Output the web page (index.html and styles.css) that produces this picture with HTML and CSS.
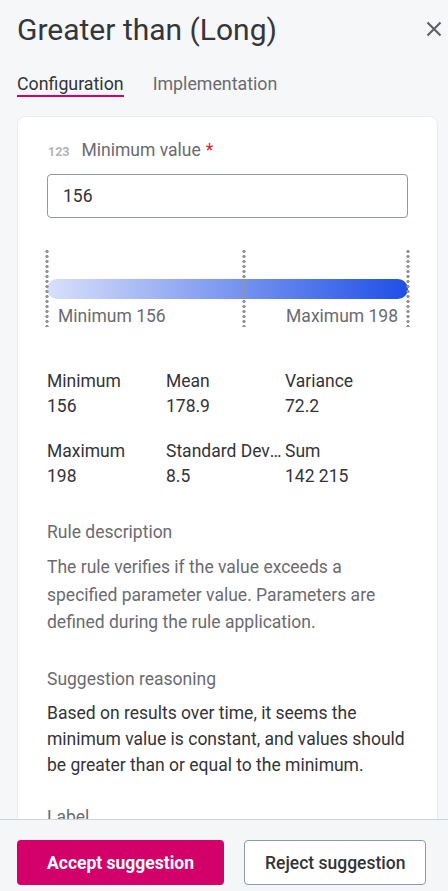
FILE: index.html
```html
<!DOCTYPE html>
<html>
<head>
<meta charset="utf-8"/>
<title>Greater than (Long)</title>
<link rel="stylesheet" href="styles.css">
</head>
<body>
<div class="panel">

<div class="header">
<h1 class="title">Greater than (Long)</h1>
<button class="close" aria-label="Close">
<svg width="16" height="16" viewBox="0 0 16 16"><path d="M1.5 1.5 L14.5 14.5 M14.5 1.5 L1.5 14.5" stroke="#5f6166" stroke-width="2.2" fill="none"/></svg>
</button>
</div>

<div class="tabs">
<span class="tab active">Configuration</span>
<span class="tab">Implementation</span>
</div>

<div class="content">
<div class="card">

<div class="field-label">
<span class="type-icon">123</span>
<span>Minimum value</span>
<span class="required">*</span>
</div>
<div class="input">156</div>

<div class="range">
<span class="dots" style="left: 0%"></span>
<span class="dots" style="left: 54.5%"></span>
<span class="dots" style="left: 100%"></span>
<div class="bar"></div>
<div class="range-labels">
<span>Minimum 156</span>
<span>Maximum 198</span>
</div>
</div>

<div class="stats">
<div class="stat"><div class="stat-name">Minimum</div><div class="stat-value">156</div></div>
<div class="stat"><div class="stat-name">Mean</div><div class="stat-value">178.9</div></div>
<div class="stat"><div class="stat-name">Variance</div><div class="stat-value">72.2</div></div>
<div class="stat"><div class="stat-name">Maximum</div><div class="stat-value">198</div></div>
<div class="stat"><div class="stat-name">Standard Deviation</div><div class="stat-value">8.5</div></div>
<div class="stat"><div class="stat-name">Sum</div><div class="stat-value">142 215</div></div>
</div>

<div class="section">
<div class="section-title">Rule description</div>
<p class="desc">The rule verifies if the value exceeds a specified parameter value. Parameters are defined during the rule application.</p>
</div>

<div class="section reasoning">
<div class="section-title">Suggestion reasoning</div>
<p class="reason">Based on results over time, it seems the minimum value is constant, and values should be greater than or equal to the minimum.</p>
</div>

<div class="section last">
<div class="section-title">Label</div>
</div>

</div>
</div>

<div class="footer">
<button class="btn primary">Accept suggestion</button>
<button class="btn secondary">Reject suggestion</button>
</div>

</div>
</body>
</html>
```

FILE: styles.css
```css
html, body {
   margin: 0;
   padding: 0;
   height: 100%;
}

body {
   font-family: Roboto, "Liberation Sans", sans-serif;
   background-color: #f6f7f9;
   color: #333438;
   overflow: hidden;
}

.panel {
   display: flex;
   flex-direction: column;
   height: 891px;
}

.header {
   display: flex;
   align-items: center;
   justify-content: space-between;
   padding: 12px 4px 0 17px;
}

.title {
   margin: 0;
   font-size: 30px;
   font-weight: 400;
   line-height: 36px;
   color: #35363a;
}

.close {
   border: none;
   background: none;
   padding: 0;
   width: 20px;
   height: 20px;
   display: flex;
   align-items: center;
   justify-content: center;
   margin-top: -2px;
}

.tabs {
   display: flex;
   gap: 29px;
   padding: 25px 17px 0;
}

.tab {
   font-size: 17.8px;
   line-height: 22px;
   color: #6a6b70;
   border-bottom: 2px solid transparent;
}

.tab.active {
   color: #333438;
   border-bottom-color: #d4006a;
}

.content {
   flex: 1;
   overflow: hidden;
   padding: 19px 10px 0 17px;
}

.card {
   background: #fff;
   border: 1px solid #e9ebee;
   border-radius: 8px;
   padding: 21px 29px 40px;
}

.field-label {
   display: flex;
   align-items: baseline;
   font-size: 17.5px;
   line-height: 24px;
   color: #6a6b70;
}

.type-icon {
   font-size: 12.5px;
   font-weight: 700;
   color: #b3b4b8;
   margin: 0 12px 0 1px;
}

.required {
   color: #d61f2b;
   margin-left: 5px;
}

.input {
   margin-top: 10px;
   height: 42px;
   border: 1px solid #8e9aa6;
   border-radius: 4px;
   padding: 0 15px;
   font-size: 17.5px;
   line-height: 42px;
   color: #333438;
}

.range {
   position: relative;
   margin-top: 31px;
   height: 78px;
   padding-top: 30px;
   box-sizing: border-box;
}

.dots {
   position: absolute;
   top: 0;
   bottom: 0;
   width: 4px;
   margin-left: -2px;
   background-image: radial-gradient(circle, #939499 1.4px, transparent 1.9px);
   background-size: 4px 5px;
   background-repeat: repeat-y;
}

.bar {
   height: 20px;
   border-radius: 10px;
   background: linear-gradient(to right, #d8e0fa, #1e4fe7);
}

.range-labels {
   display: flex;
   justify-content: space-between;
   padding: 5px 10px 0 11px;
   font-size: 17.5px;
   line-height: 24px;
   color: #6a6b70;
}

.stats {
   display: grid;
   grid-template-columns: repeat(3, 119px);
   row-gap: 21px;
   margin-top: 42px;
   font-size: 17.5px;
   color: #333438;
}

.stat {
   min-width: 0;
}

.stat-name {
   line-height: 25px;
   white-space: nowrap;
   overflow: hidden;
   text-overflow: ellipsis;
}

.stat-value {
   line-height: 24px;
}

.section {
   margin-top: 32px;
}

.section-title {
   font-size: 17.5px;
   line-height: 24px;
   color: #6a6b70;
}

.desc {
   margin: 10px 0 0;
   font-size: 17.5px;
   line-height: 27.5px;
   color: #6a6b70;
}

.section.reasoning {
   margin-top: 30px;
}

.reason {
   margin: 9px 0 0;
   font-size: 17.5px;
   line-height: 26px;
   color: #333438;
}

.section.last {
   margin-top: 27px;
}

.footer {
   display: flex;
   gap: 20px;
   height: 72px;
   box-sizing: border-box;
   padding: 20px 17px 0;
   border-top: 1px solid #cdd5dc;
   background: #f5f6f8;
}

.btn {
   height: 45px;
   font-family: Roboto, "Liberation Sans", sans-serif;
   font-size: 17.5px;
   border-radius: 4px;
   cursor: pointer;
}

.btn.primary {
   padding: 0 30px;
   background: #d4006a;
   border: none;
   color: #fff;
   font-weight: 700;
}

.btn.secondary {
   padding: 0 20px;
   background: #fff;
   border: 1px solid #8e9aa6;
   color: #333438;
   font-weight: 500;
}
```
